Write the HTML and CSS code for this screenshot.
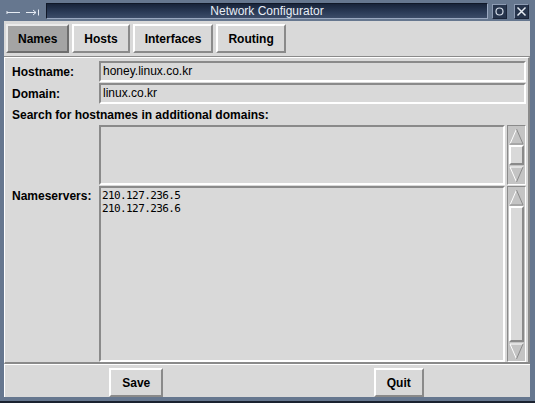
FILE: index.html
```html
<!DOCTYPE html>
<html>
<head>
<meta charset="utf-8">
<link rel="stylesheet" href="styles.css">
</head>
<body>
<div class="window">
  <div class="titlebar">
    <div class="wm-left">
      <svg width="40" height="21" viewBox="0 0 40 21">
        <path d="M7 12.5h13M7 11v3" stroke="#e6ecf4" stroke-width="1" fill="none"/>
        <path d="M26 12.5h10M33 10l3 2.5-3 2.5M38.5 9.5v6" stroke="#e6ecf4" stroke-width="1" fill="none"/>
      </svg>
    </div>
    <div class="wm-title">Network Configurator</div>
    <div class="wm-btn">
      <svg width="11" height="11" viewBox="0 0 11 11"><circle cx="5.5" cy="5.5" r="3.5" stroke="#d4dce8" stroke-width="1.2" fill="none"/></svg>
    </div>
    <div class="wm-btn">
      <svg width="11" height="11" viewBox="0 0 11 11"><path d="M1.5 1.5l8 8M9.5 1.5l-8 8" stroke="#e6ecf4" stroke-width="1.5" fill="none"/></svg>
    </div>
  </div>
  <div class="client">
    <div class="tabs">
      <button class="btn active">Names</button>
      <button class="btn">Hosts</button>
      <button class="btn">Interfaces</button>
      <button class="btn">Routing</button>
    </div>
    <div class="form">
      <div class="label">Hostname:</div>
      <div class="entry">honey.linux.co.kr</div>
      <div class="label">Domain:</div>
      <div class="entry">linux.co.kr</div>
      <div class="label wide">Search for hostnames in additional domains:</div>
      <div class="label"></div>
      <div class="textwrap">
        <div class="textbox"></div>
        <div class="scrollbar">
          <div class="arrow">
            <svg width="15" height="17" viewBox="0 0 15 17"><path d="M1 16L7.5 1" stroke="#fff" fill="none"/><path d="M7.5 1L14 16H1" stroke="#8a8a8a" fill="none"/></svg>
          </div>
          <div class="thumb"></div>
          <div class="arrow">
            <svg width="15" height="17" viewBox="0 0 15 17"><path d="M14 1H1L7.5 16" stroke="#fff" fill="none"/><path d="M7.5 16L14 1" stroke="#8a8a8a" fill="none"/></svg>
          </div>
        </div>
      </div>
      <div class="label top">Nameservers:</div>
      <div class="textwrap">
        <div class="textbox mono">210.127.236.5
210.127.236.6</div>
        <div class="scrollbar">
          <div class="arrow">
            <svg width="15" height="17" viewBox="0 0 15 17"><path d="M1 16L7.5 1" stroke="#fff" fill="none"/><path d="M7.5 1L14 16H1" stroke="#8a8a8a" fill="none"/></svg>
          </div>
          <div class="thumb"></div>
          <div class="arrow">
            <svg width="15" height="17" viewBox="0 0 15 17"><path d="M14 1H1L7.5 16" stroke="#fff" fill="none"/><path d="M7.5 16L14 1" stroke="#8a8a8a" fill="none"/></svg>
          </div>
        </div>
      </div>
    </div>
    <div class="bottom">
      <div class="cell"><button class="btn wide-btn">Save</button></div>
      <div class="cell"><button class="btn wide-btn">Quit</button></div>
    </div>
  </div>
</div>
</body>
</html>
```
FILE: styles.css
```css
html, body {
  margin: 0;
  padding: 0;
  overflow: hidden;
}
body {
  width: 535px;
  height: 403px;
  font-family: "Liberation Sans", Arial, sans-serif;
  font-size: 12px;
  color: #000;
}
.window {
  width: 535px;
  height: 403px;
  box-sizing: border-box;
  background: #66778f;
  border-bottom: 2px solid #1a2230;
  display: flex;
  flex-direction: column;
}
.titlebar {
  height: 21px;
  flex: none;
  display: flex;
  align-items: center;
}
.wm-left {
  width: 46px;
  height: 21px;
  flex: none;
}
.wm-left svg { display: block; }
.wm-title {
  flex: 1;
  height: 16px;
  margin: 1px 4px 0 0;
  box-sizing: border-box;
  background: linear-gradient(#18243a, #2c3c58 60%, #3c4c68);
  border-top: 1px solid #101828;
  border-left: 1px solid #101828;
  border-bottom: 1px solid #9aa8c0;
  border-right: 1px solid #9aa8c0;
  color: #e8eef6;
  font-size: 12px;
  line-height: 14px;
  text-align: center;
}
.wm-btn {
  width: 15px;
  height: 15px;
  box-sizing: border-box;
  margin-top: 1px;
  margin-right: 7px;
  background: #26344c;
  border: 1px solid #8e9cb4;
  border-right-color: #1a2438;
  border-bottom-color: #1a2438;
  display: flex;
  align-items: center;
  justify-content: center;
}
.wm-btn + .wm-btn { margin-right: 6px; }
.wm-btn svg { display: block; }
.client {
  flex: 1;
  margin: 0 5px 4px 4px;
  background: #d9d9d9;
  display: flex;
  flex-direction: column;
}
.btn {
  font-family: "Liberation Sans", Arial, sans-serif;
  font-weight: bold;
  font-size: 12px;
  color: #000;
  background: #d9d9d9;
  border: 2px solid;
  border-color: #ffffff #8a8a8a #8a8a8a #ffffff;
  padding: 0 10px;
  margin: 0;
  height: 29px;
}
.btn.wide-btn {
  padding: 0 11px;
}
.btn.active {
  background: #a4a4a4;
  border-color: #ececec #6e6e6e #6e6e6e #ececec;
}
.tabs {
  height: 36px;
  box-sizing: border-box;
  flex: none;
  display: flex;
  gap: 3px;
  padding: 3px 0 0 2px;
  border-bottom: 1px solid #8a8a8a;
}
.form {
  flex: 1;
  box-sizing: border-box;
  border-top: 1px solid #ffffff;
  border-left: 1px solid #ffffff;
  border-right: 2px solid #8a8a8a;
  border-bottom: 2px solid #8a8a8a;
  padding: 3px 2px 0 7px;
  display: grid;
  grid-template-columns: 87px 1fr;
  grid-template-rows: 21px 21px 19px 60px 1fr;
  row-gap: 1px;
}
.label {
  font-weight: bold;
  display: flex;
  align-items: center;
}
.label.wide {
  grid-column: 1 / -1;
}
.label.top {
  align-items: flex-start;
  padding-top: 3px;
}
.entry {
  box-sizing: border-box;
  border: 2px solid;
  border-color: #8a8a8a #ffffff #ffffff #8a8a8a;
  padding: 0 2px;
  line-height: 17px;
}
.textwrap {
  display: flex;
  gap: 2px;
  min-height: 0;
}
.textbox {
  flex: 1;
  box-sizing: border-box;
  border: 2px solid;
  border-color: #8a8a8a #ffffff #ffffff #8a8a8a;
  padding: 1px 1px;
}
.mono {
  font-family: "DejaVu Sans Mono", "Liberation Mono", monospace;
  font-size: 11px;
  letter-spacing: -0.6px;
  line-height: 13px;
  white-space: pre;
}
.scrollbar {
  width: 19px;
  flex: none;
  box-sizing: border-box;
  border: 1px solid;
  border-color: #8a8a8a #ffffff #ffffff #8a8a8a;
  background: #c4c4c4;
  display: flex;
  flex-direction: column;
  padding: 1px;
}
.arrow {
  height: 18px;
  flex: none;
  display: flex;
  align-items: center;
  justify-content: center;
}
.arrow svg { display: block; }
.thumb {
  flex: 1;
  box-sizing: border-box;
  background: #d9d9d9;
  border: 2px solid;
  border-color: #ffffff #8a8a8a #8a8a8a #ffffff;
}
.bottom {
  height: 33px;
  flex: none;
  box-sizing: border-box;
  border-top: 1px solid #ffffff;
  border-left: 1px solid #ffffff;
  padding-top: 3px;
  display: grid;
  grid-template-columns: 1fr 1fr;
}
.cell {
  display: flex;
  justify-content: center;
  align-items: flex-start;
}
```
